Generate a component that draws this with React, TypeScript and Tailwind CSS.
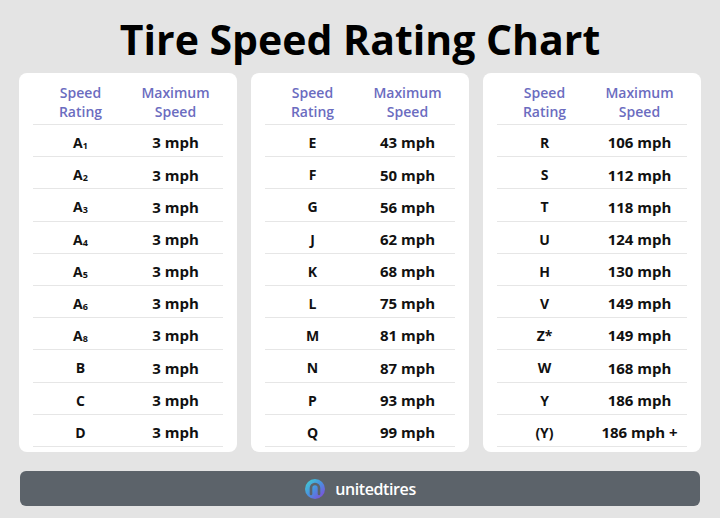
const sub = (n: string) => (
  <>
    A<span className="text-[9px] relative top-[1px]">{n}</span>
  </>
);

const columns: { r: React.ReactNode; v: string }[][] = [
  [
    { r: sub("1"), v: "3 mph" },
    { r: sub("2"), v: "3 mph" },
    { r: sub("3"), v: "3 mph" },
    { r: sub("4"), v: "3 mph" },
    { r: sub("5"), v: "3 mph" },
    { r: sub("6"), v: "3 mph" },
    { r: sub("8"), v: "3 mph" },
    { r: "B", v: "3 mph" },
    { r: "C", v: "3 mph" },
    { r: "D", v: "3 mph" },
  ],
  [
    { r: "E", v: "43 mph" },
    { r: "F", v: "50 mph" },
    { r: "G", v: "56 mph" },
    { r: "J", v: "62 mph" },
    { r: "K", v: "68 mph" },
    { r: "L", v: "75 mph" },
    { r: "M", v: "81 mph" },
    { r: "N", v: "87 mph" },
    { r: "P", v: "93 mph" },
    { r: "Q", v: "99 mph" },
  ],
  [
    { r: "R", v: "106 mph" },
    { r: "S", v: "112 mph" },
    { r: "T", v: "118 mph" },
    { r: "U", v: "124 mph" },
    { r: "H", v: "130 mph" },
    { r: "V", v: "149 mph" },
    { r: "Z*", v: "149 mph" },
    { r: "W", v: "168 mph" },
    { r: "Y", v: "186 mph" },
    { r: "(Y)", v: "186 mph +" },
  ],
];

const Logo = () => (
  <svg width="22" height="22" viewBox="0 0 22 22">
    <defs>
      <linearGradient id="lg" x1="0" y1="0" x2="1" y2="1">
        <stop offset="0" stopColor="#3fd6d0" />
        <stop offset="0.5" stopColor="#4a8fe0" />
        <stop offset="1" stopColor="#8a3fd8" />
      </linearGradient>
    </defs>
    <circle cx="11" cy="11" r="10" fill="url(#lg)" />
    <path d="M7 16 V10 a4 4 0 0 1 8 0 V16" fill="none" stroke="#5c636a" strokeWidth="2.6" strokeLinecap="round" />
  </svg>
);

const App = () => {
  return (
    <div className="w-[720px] h-[518px] bg-[#e4e4e4] font-['Open_Sans',sans-serif] flex flex-col px-[19px]">
      <h1 className="text-center text-[41px] font-bold text-black leading-none pt-[19px] h-[73px]">
        Tire Speed Rating Chart
      </h1>
      <div className="flex gap-[14px]">
        {columns.map((rows, i) => (
          <div key={i} className="w-[218px] h-[379px] bg-white rounded-lg px-[14px] pt-[10px]">
            <div className="grid grid-cols-2 text-center text-[14px] leading-[19px] font-semibold text-[#6b6cc0] pb-[3px] border-b border-[#e6e6e6]">
              <div>Speed<br />Rating</div>
              <div>Maximum<br />Speed</div>
            </div>
            {rows.map((row, j) => (
              <div key={j} className="grid grid-cols-2 text-center items-center pt-[4px] h-[32.2px] border-b border-[#e6e6e6] text-[#111]">
                <div className="text-[14px] font-bold">{row.r}</div>
                <div className="text-[15px] font-bold">{row.v}</div>
              </div>
            ))}
          </div>
        ))}
      </div>
      <div className="mt-[19px] h-[35px] mx-[1px] bg-[#5c636a] rounded-md flex items-center justify-center gap-[9px]">
        <Logo />
        <span className="text-white text-[16px] font-semibold tracking-tight">unitedtires</span>
      </div>
    </div>
  );
};

export default App;
